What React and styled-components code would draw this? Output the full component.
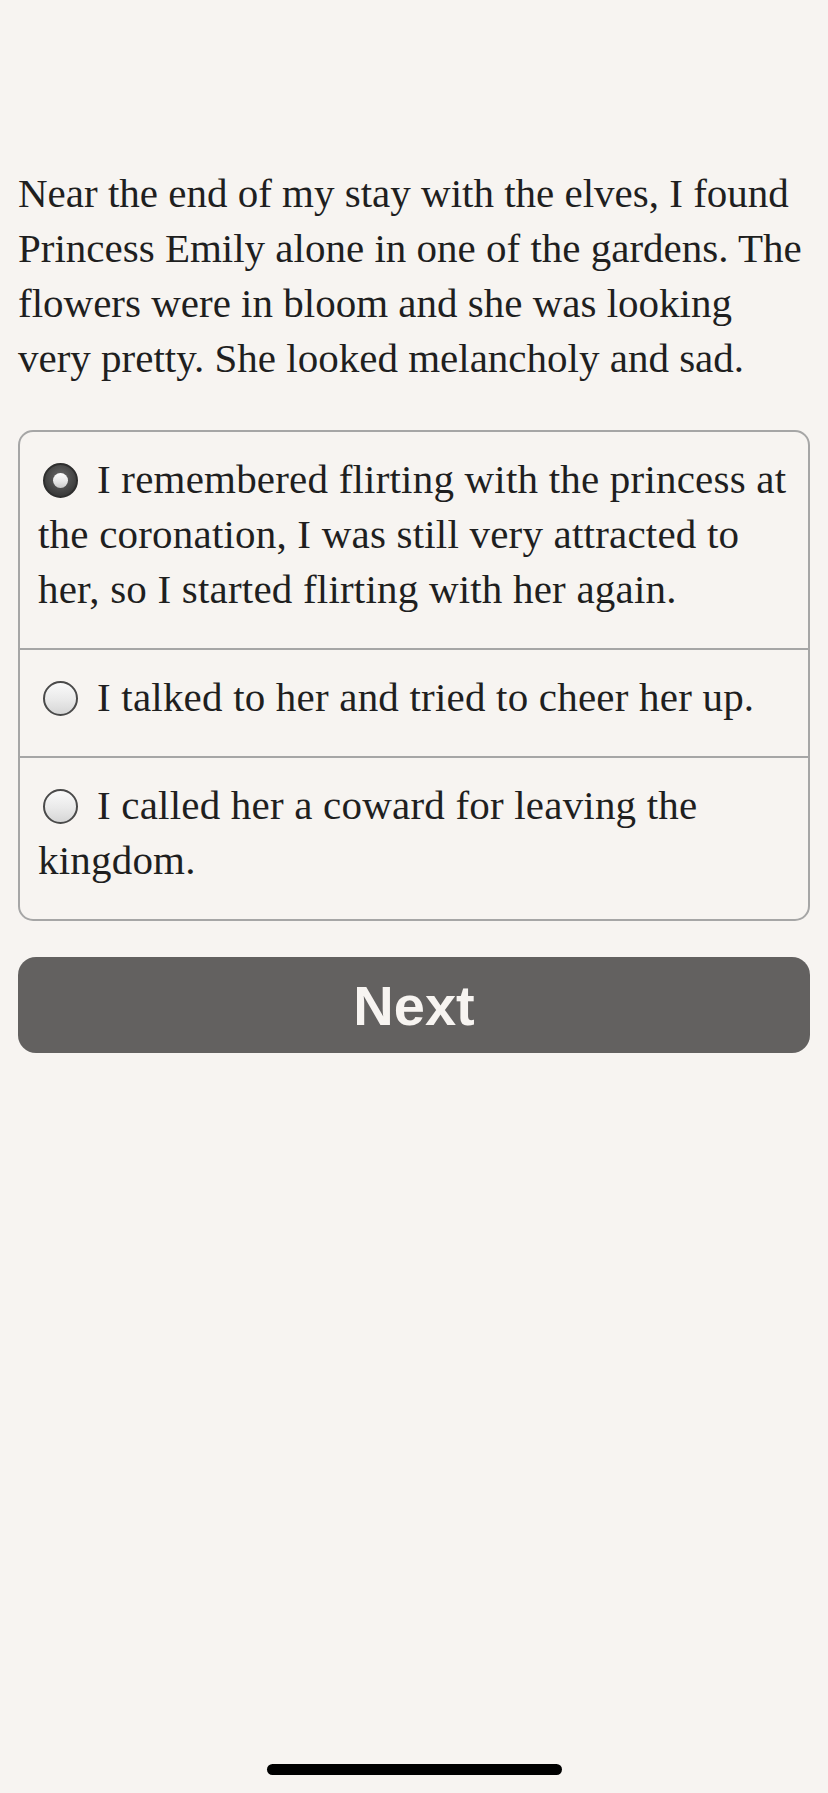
import React from 'react'
import styled, { createGlobalStyle } from 'styled-components'

const GlobalStyle = createGlobalStyle`
  html, body {
    margin: 0;
    padding: 0;
    background: #f7f4f1;
  }
  * {
    box-sizing: border-box;
  }
`

const Page = styled.div`
  min-height: 1793px;
  display: flex;
  flex-direction: column;
  padding: 166px 18px 18px;
  font-family: 'Liberation Serif', 'Times New Roman', serif;
  color: #1f1f1f;
`

const Story = styled.p`
  margin: 0 0 44px;
  font-size: 41px;
  line-height: 55px;
`

const Choices = styled.div`
  border: 2px solid #a6a6a6;
  border-radius: 15px;
  overflow: hidden;
`

const Choice = styled.label`
  display: block;
  padding: 20px 18px 31px;
  font-size: 41px;
  line-height: 55px;
  letter-spacing: 0.2px;
  & + & {
    border-top: 2px solid #a6a6a6;
  }
`

const Radio = styled.span`
  display: inline-block;
  width: 35px;
  height: 35px;
  margin: 0 19px 0 5px;
  vertical-align: -5px;
  border-radius: 50%;
  position: relative;
  border: 2px solid ${(p) => (p.checked ? '#2e2e2e' : '#4a4a4a')};
  background: ${(p) =>
    p.checked
      ? 'radial-gradient(circle at 50% 40%, #6a6a6a 0%, #3d3d3d 70%, #2a2a2a 100%)'
      : 'linear-gradient(180deg, #fafafa 0%, #e9e9e9 55%, #d6d6d6 100%)'};
  &::after {
    content: '';
    display: ${(p) => (p.checked ? 'block' : 'none')};
    position: absolute;
    left: 50%;
    top: 50%;
    width: 15px;
    height: 15px;
    margin: -7.5px 0 0 -7.5px;
    border-radius: 50%;
    background: linear-gradient(180deg, #ffffff 0%, #e4e4e4 60%, #c8c8c8 100%);
  }
`

const NextButton = styled.button`
  margin-top: 36px;
  height: 96px;
  width: 100%;
  border: none;
  border-radius: 18px;
  background: #636160;
  color: #f7f4f1;
  font-family: 'Liberation Sans', Arial, sans-serif;
  font-weight: 700;
  font-size: 56px;
  cursor: pointer;
`

const HomeBar = styled.div`
  margin: auto auto 0;
  width: 295px;
  height: 11px;
  border-radius: 6px;
  background: #000;
`

const choices = [
  {
    text: 'I remembered flirting with the princess at the coronation, I was still very attracted to her, so I started flirting with her again.',
    checked: true,
  },
  { text: 'I talked to her and tried to cheer her up.' },
  { text: 'I called her a coward for leaving the kingdom.' },
]

export default function App() {
  return (
    <>
      <GlobalStyle />
      <Page>
        <Story>
          Near the end of my stay with the elves, I found Princess Emily alone
          in one of the gardens. The flowers were in bloom and she was looking
          very pretty. She looked melancholy and sad.
        </Story>
        <Choices>
          {choices.map(({ text, checked }) => (
            <Choice key={text}>
              <Radio checked={checked} />
              {text}
            </Choice>
          ))}
        </Choices>
        <NextButton>Next</NextButton>
        <HomeBar />
      </Page>
    </>
  )
}
